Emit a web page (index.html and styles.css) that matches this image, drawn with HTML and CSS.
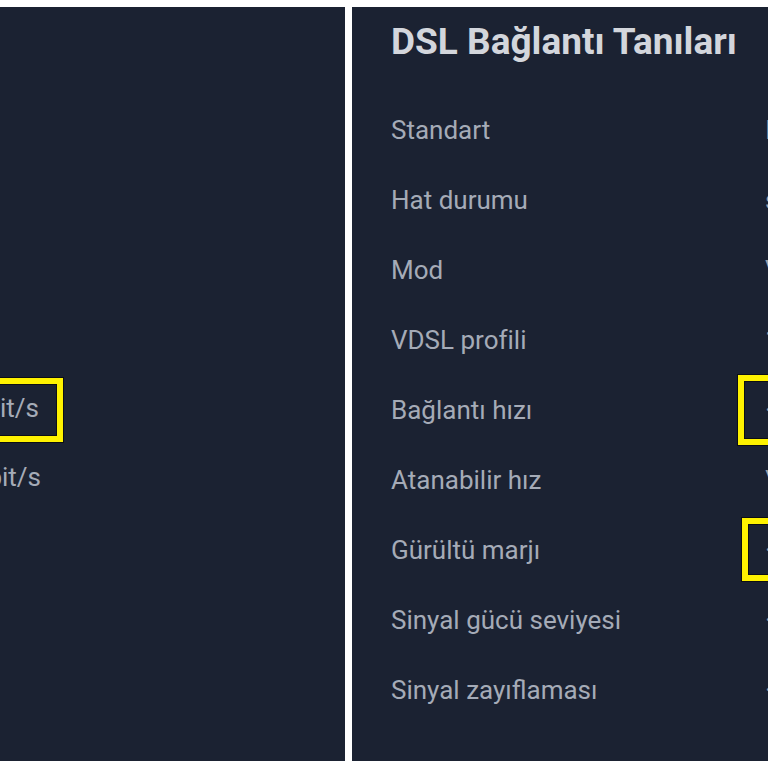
FILE: index.html
```html
<!DOCTYPE html>
<html lang="tr">
<head>
<meta charset="utf-8">
<title>DSL Bağlantı Tanıları</title>
<link rel="stylesheet" href="styles.css">
</head>
<body>
<div class="stage">
  <section class="panel panel-left">
    <div class="title-space"></div>
    <div class="rows">
      <div class="lrow"><span class="val"></span></div>
      <div class="lrow"><span class="val"></span></div>
      <div class="lrow"><span class="val"></span></div>
      <div class="lrow"><span class="val"></span></div>
      <div class="lrow"><span class="val hl-left">52,4 Mbit/s</span></div>
      <div class="lrow lrow-b"><span class="val">63,8 Mbit/s</span></div>
      <div class="lrow"><span class="val"></span></div>
      <div class="lrow"><span class="val"></span></div>
      <div class="lrow"><span class="val"></span></div>
    </div>
  </section>
  <section class="panel panel-right">
    <h1 class="title">DSL Bağlantı Tanıları</h1>
    <div class="rows">
      <div class="row"><span class="label">Standart</span><span class="rval">ITU G.993.2</span></div>
      <div class="row"><span class="label">Hat durumu</span><span class="rval">sync</span></div>
      <div class="row"><span class="label">Mod</span><span class="rval">VDSL2</span></div>
      <div class="row"><span class="label">VDSL profili</span><span class="rval">17a</span></div>
      <div class="row"><span class="label">Bağlantı hızı</span><span class="rval"><span class="hl hl-r1"></span>· 52,4</span></div>
      <div class="row"><span class="label">Atanabilir hız</span><span class="rval">\ 63,8</span></div>
      <div class="row"><span class="label">Gürültü marjı</span><span class="rval"><span class="hl hl-r2"></span>· 8,1 dB</span></div>
      <div class="row"><span class="label">Sinyal gücü seviyesi</span><span class="rval">· 14,2 dBm</span></div>
      <div class="row"><span class="label">Sinyal zayıflaması</span><span class="rval">· 12,5 dB</span></div>
    </div>
  </section>
</div>
</body>
</html>
```

FILE: styles.css
```css
html, body {
  margin: 0;
  padding: 0;
  background: #ffffff;
  overflow: hidden;
}

body {
  width: 768px;
  height: 768px;
  font-family: Roboto, "Liberation Sans", sans-serif;
}

.stage {
  display: flex;
  gap: 7px;
  padding-top: 7px;
  height: 754px;
}

.panel {
  background: #1b2232;
  height: 754px;
  overflow: hidden;
  display: flex;
  flex-direction: column;
  position: relative;
}

.panel-left {
  width: 345px;
  flex: none;
}

.panel-right {
  width: 416px;
  flex: none;
  padding-left: 39px;
  box-sizing: border-box;
}

.title-space {
  height: 86px;
  flex: none;
}

.title {
  margin: 10px 0 0 0;
  height: 50px;
  line-height: 50px;
  font-size: 37px;
  font-weight: 700;
  color: #d3d6dc;
  white-space: nowrap;
  flex: none;
}

.panel-right .rows {
  margin-top: 28px;
}

.rows {
  display: flex;
  flex-direction: column;
}

.row {
  height: 70px;
  display: grid;
  grid-template-columns: 374px auto;
  align-items: center;
  font-size: 26px;
  color: #a5abb7;
  white-space: nowrap;
}

.lrow {
  height: 70px;
  display: flex;
  justify-content: flex-end;
  align-items: center;
  padding-right: 306px;
  font-size: 26px;
  color: #a5abb7;
  white-space: nowrap;
}

.lrow-b {
  height: 68px;
  padding-right: 304px;
}

.label {
  line-height: 30px;
}

.rval {
  position: relative;
  line-height: 30px;
  color: #9aa0ac;
}

.val {
  position: relative;
  line-height: 30px;
  flex: none;
}

.hl {
  position: absolute;
  border: 6px solid #fff200;
  box-shadow: 0 0 0 1px #0d0f14, inset 0 0 0 1px #0d0f14;
  box-sizing: border-box;
}

.hl-left::before {
  content: "";
  position: absolute;
  right: -24px;
  top: -15px;
  width: 300px;
  height: 64px;
  border: 6px solid #fff200;
  box-shadow: 0 0 0 1px #0d0f14, inset 0 0 0 1px #0d0f14;
  box-sizing: border-box;
}

.hl-r1 {
  left: -27px;
  top: -20px;
  width: 200px;
  height: 70px;
}

.hl-r2 {
  left: -23px;
  top: -17px;
  width: 200px;
  height: 63px;
}
```
